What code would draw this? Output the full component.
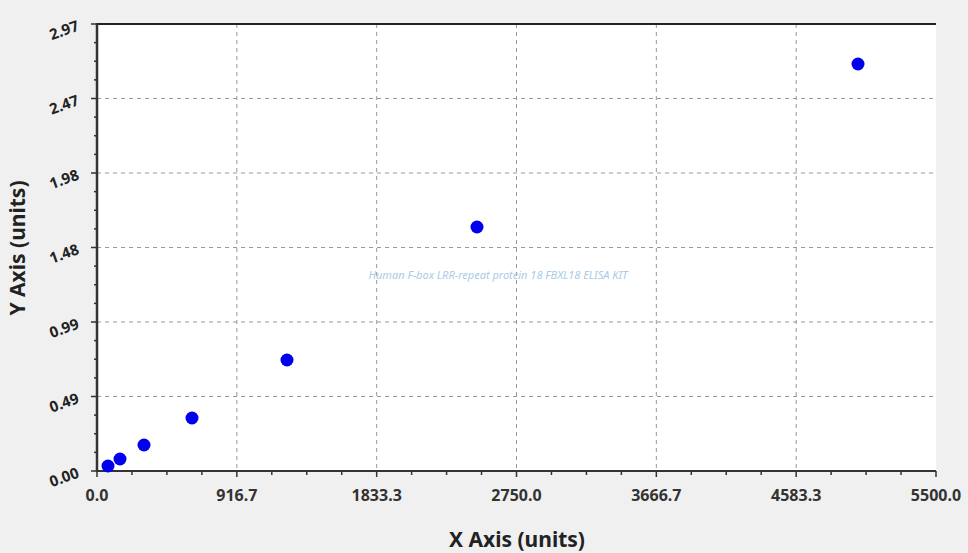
import React from 'react';

const L = 97, T = 24, R = 936, B = 471;
const xs = [0, 916.7, 1833.3, 2750.0, 3666.7, 4583.3, 5500.0];
const ys = ['0.00', '0.49', '0.99', '1.48', '1.98', '2.47', '2.97'];
const pts = [[108, 466], [120, 459], [144, 445], [192, 418], [287, 360], [477, 227], [858, 64]];

export default function App() {
  const dx = (R - L) / 6;
  const dy = (B - T) / 6;
  return (
    <div className="w-[968px] h-[553px] bg-[#f0f0f0] font-['Liberation_Sans',Arial,sans-serif]">
      <svg width="968" height="553" viewBox="0 0 968 553">
        <rect x={L} y={T} width={R - L} height={B - T} fill="#fff" />
        {[1, 2, 3, 4, 5].map(i => (
          <line key={'gx' + i} x1={L + i * dx} y1={T} x2={L + i * dx} y2={B} stroke="#999" strokeDasharray="4 4" />
        ))}
        {[1, 2, 3, 4, 5].map(i => (
          <line key={'gy' + i} x1={L} y1={B - i * dy} x2={R} y2={B - i * dy} stroke="#999" strokeDasharray="4 4" />
        ))}
        {Array.from({ length: 25 }, (_, i) => (
          <line key={'ty' + i} x1={L - (i % 4 === 0 ? 6 : 3)} y1={B - i * dy / 4} x2={L} y2={B - i * dy / 4} stroke="#333" strokeWidth="1.5" />
        ))}
        {Array.from({ length: 25 }, (_, i) => (
          <line key={'tx' + i} x1={L + i * dx / 4} y1={B} x2={L + i * dx / 4} y2={B + (i % 4 === 0 ? 6 : 4)} stroke="#333" strokeWidth="1.5" />
        ))}
        <line x1={L} y1={T} x2={R} y2={T} stroke="#222" strokeWidth="2" />
        <line x1={L} y1={T - 1} x2={L} y2={B + 1} stroke="#333" strokeWidth="2.5" />
        <line x1={L} y1={B} x2={R} y2={B} stroke="#333" strokeWidth="2" />
        {ys.map((t, i) => (
          <text key={t} x={0} y={0} transform={`translate(80 ${B - i * dy + 6}) rotate(-20)`} textAnchor="end" fontSize="15" fontWeight="bold" fill="#222">{t}</text>
        ))}
        {xs.map((t, i) => (
          <text key={t} x={L + i * dx} y={501} textAnchor="middle" fontSize="16" fontWeight="bold" fill="#333">{t.toFixed(1)}</text>
        ))}
        {pts.map(([x, y], i) => (
          <circle key={i} cx={x} cy={y} r="6.5" fill="#0000ee" />
        ))}
        <text x={498} y={279} textAnchor="middle" fontSize="11" fontStyle="italic" fill="#a8cbe8">Human F-box LRR-repeat protein 18 FBXL18 ELISA KIT</text>
        <text x={517} y={547} textAnchor="middle" fontSize="21" fontWeight="bold" fill="#222">X Axis (units)</text>
        <text x={0} y={0} transform="translate(25 248) rotate(-90)" textAnchor="middle" fontSize="21" fontWeight="bold" fill="#222">Y Axis (units)</text>
      </svg>
    </div>
  );
}
